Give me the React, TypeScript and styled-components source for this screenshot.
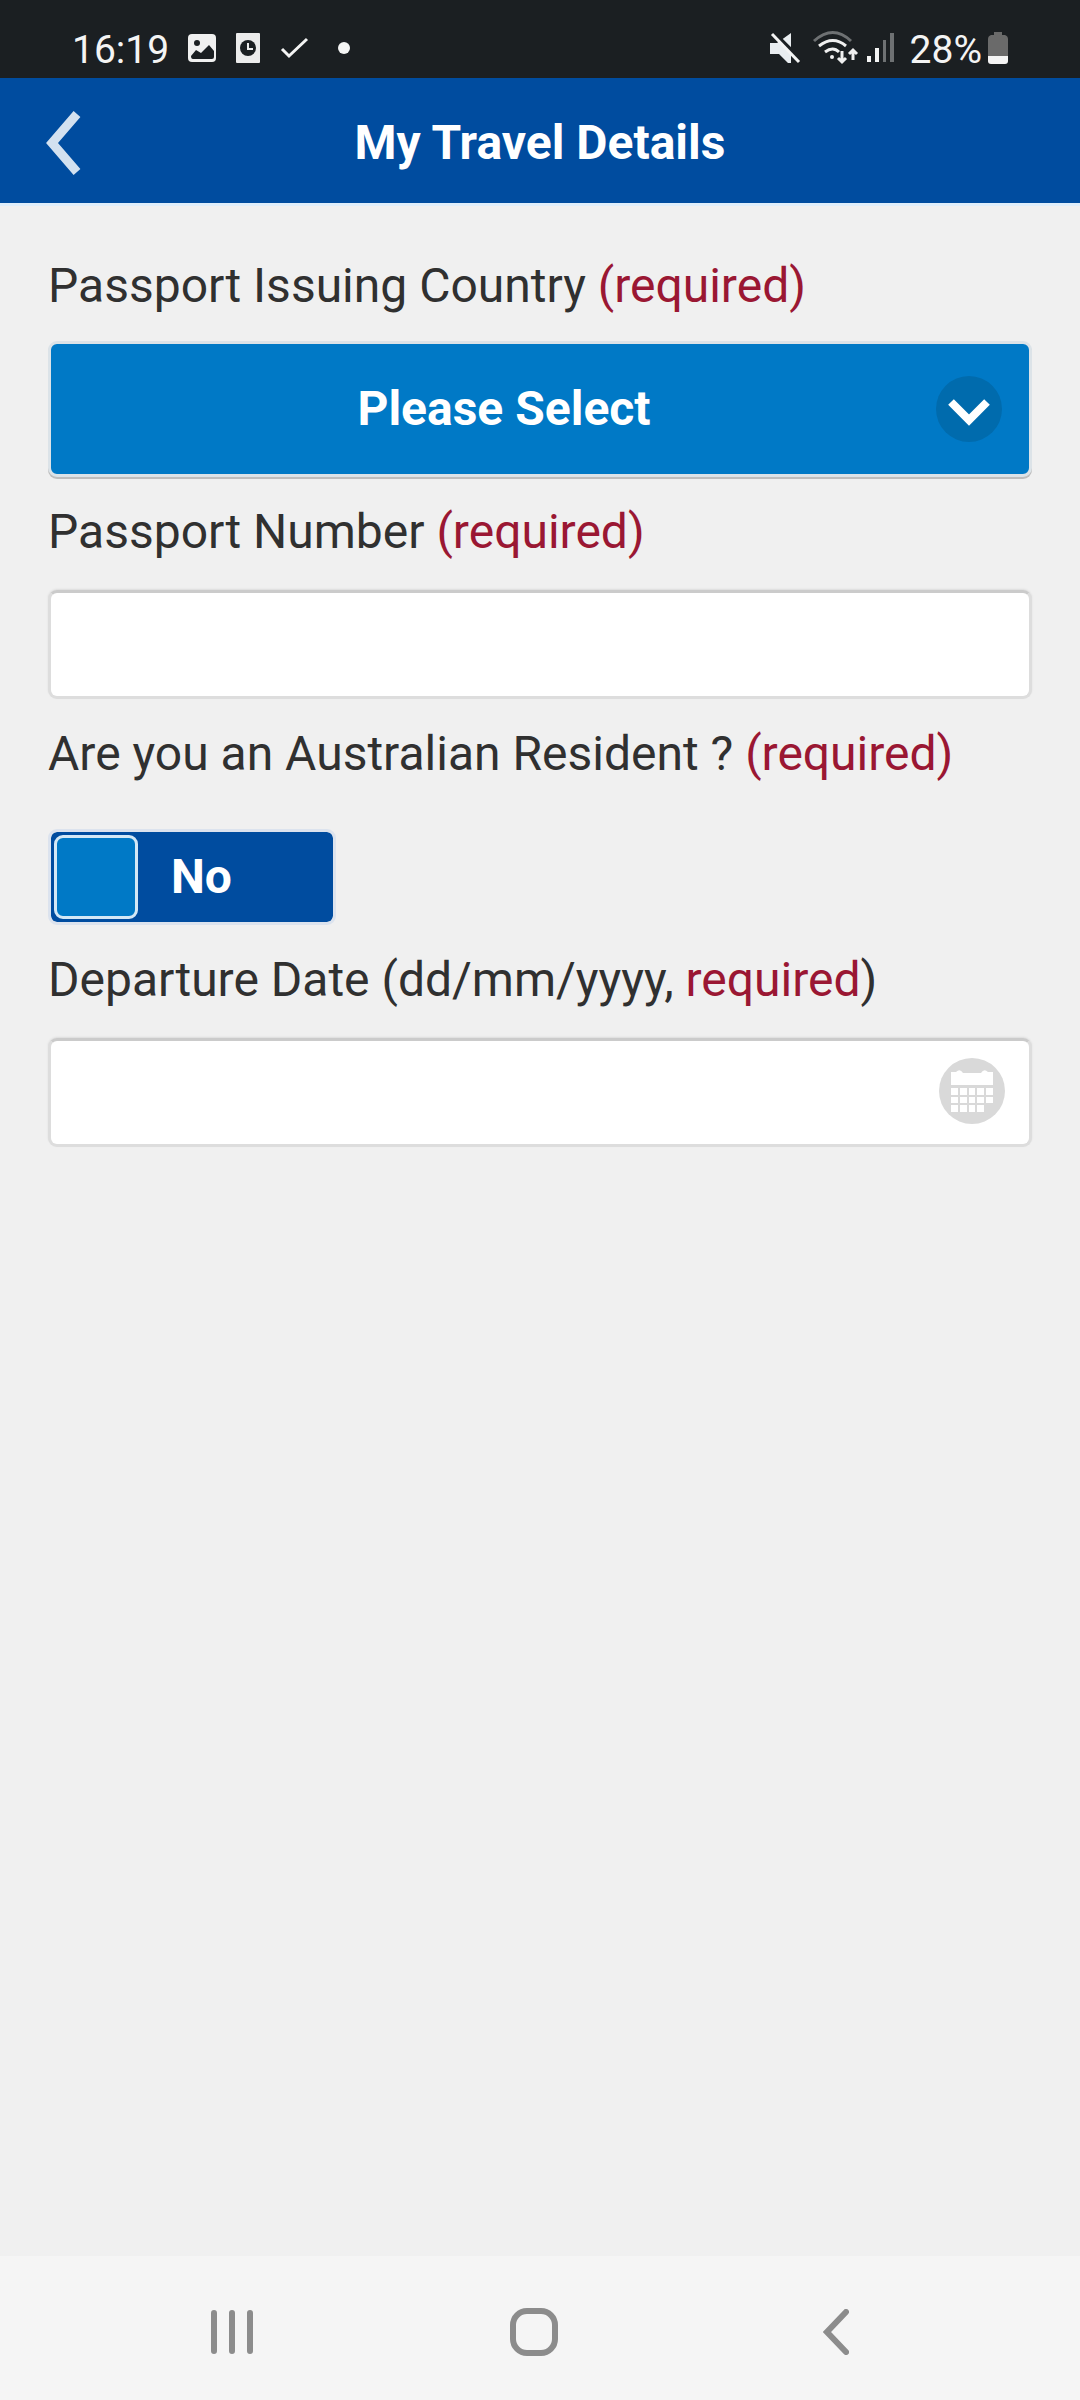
import React, { useState } from "react";
import styled, { createGlobalStyle } from "styled-components";

const color = {
  status: "#1b1f22",
  navy: "#004c9f",
  blue: "#0079c6",
  disc: "#006bad",
  page: "#f0f0f0",
  nav: "#f5f5f5",
  text: "#303030",
  required: "#9a1733",
  icon: "#8c8c8c",
};

const GlobalStyle = createGlobalStyle`
  * { box-sizing: border-box; }
  body {
    margin: 0;
    background: ${color.page};
    color: ${color.text};
    font-family: Roboto, "Noto Sans", sans-serif;
    font-size: 48px;
    line-height: 56px;
  }
  button, input, select { font: inherit; }
`;

const Screen = styled.div`
  min-height: 100vh;
  display: flex;
  flex-direction: column;
`;

const StatusBar = styled.div`
  display: flex;
  justify-content: space-between;
  padding: 26px 72px 4px 72px;
  background: ${color.status};
  color: #f4f4f4;
  font-size: 39px;
  line-height: 48px;
`;

const StatusGroup = styled.div<{ $gap: number }>`
  display: flex;
  align-items: center;
  gap: ${(p) => p.$gap}px;
`;

const Header = styled.header`
  display: grid;
  grid-template-columns: 120px 1fr 120px;
  align-items: center;
  height: 128px;
  padding-top: 4px;
  background: ${color.navy};
  border-bottom: 3px solid #dfeefb;
`;

const BackButton = styled.button`
  display: flex;
  align-items: center;
  padding: 0 0 0 44px;
  border: 0;
  background: none;
`;

const Title = styled.h1`
  margin: 0;
  color: #fff;
  font-size: 48px;
  font-weight: 700;
  text-align: center;
`;

const Form = styled.form`
  flex: 1;
  padding: 52px 48px;
`;

const Field = styled.div<{ $labelGap: number }>`
  display: flex;
  flex-direction: column;
  gap: ${(p) => p.$labelGap}px;
  margin-bottom: 27px;
`;

const Label = styled.label`
  display: block;
`;

const Required = styled.span`
  color: ${color.required};
`;

const ControlBox = styled.div`
  position: relative;
  display: flex;
`;

const Select = styled.select`
  appearance: none;
  width: 100%;
  height: 136px;
  padding: 0 72px 0 0;
  border: 3px solid #dce3e8;
  border-radius: 9px;
  box-shadow: 0 2px 0 #bdbdbd;
  background: ${color.blue};
  color: #fff;
  font-weight: 700;
  text-align: center;
  text-align-last: center;
`;

const Adornment = styled.span`
  position: absolute;
  top: 0;
  bottom: 0;
  right: 30px;
  display: flex;
  align-items: center;
  pointer-events: none;
`;

const TextInput = styled.input`
  width: 100%;
  height: 109px;
  padding: 0 24px;
  border: 3px solid #dddddd;
  border-top-color: #cbcbcb;
  border-radius: 9px;
  box-shadow: 0 -1px 2px #dcdcdc;
  background: #fff;
  color: ${color.text};
`;

const CalendarButton = styled.button`
  position: absolute;
  top: 0;
  bottom: 0;
  right: 27px;
  display: flex;
  align-items: center;
  padding: 0 0 3px;
  border: 0;
  background: none;
`;

const SwitchTrack = styled.label`
  display: flex;
  align-self: flex-start;
  align-items: center;
  gap: 33px;
  width: 288px;
  height: 96px;
  padding: 3px;
  border: 3px solid #dce3ee;
  border-radius: 9px;
  background: ${color.navy};
  background-clip: padding-box;
  color: #fff;
  font-weight: 700;

  &:has(input:checked) {
    flex-direction: row-reverse;
  }
`;

const SwitchKnob = styled.input`
  appearance: none;
  width: 84px;
  height: 84px;
  margin: 0;
  border: 3px solid #d3e8f6;
  border-radius: 9px;
  background: ${color.blue};
`;

const NavBar = styled.nav`
  display: grid;
  grid-template-columns: repeat(3, 1fr);
  height: 144px;
  padding: 8px 93px 0 81px;
  background: ${color.nav};
`;

const NavButton = styled.button`
  display: flex;
  align-items: center;
  justify-content: center;
  padding: 0;
  border: 0;
  background: none;
`;

function NotificationIcons() {
  return (
    <svg width="164" height="40" viewBox="188 30 164 40" aria-hidden="true">
      <rect x="188" y="34" width="28" height="28" rx="4" fill="#f0f0f0" />
      <circle cx="197" cy="43" r="3" fill={color.status} />
      <path d="M191 56l5-6 5 3 8-8 5 6v6q0 2-2 2h-19q-2 0-2-3z" fill={color.status} />
      <rect x="236" y="33" width="24" height="30" rx="1" fill="#ececec" />
      <circle cx="248" cy="48" r="8" fill={color.status} />
      <path d="M248 43v6h5" fill="none" stroke="#ececec" strokeWidth="2" />
      <path d="M282 49l7 7 18-17" fill="none" stroke="#f4f4f4" strokeWidth="3" />
      <circle cx="344" cy="48" r="6" fill="#f4f4f4" />
    </svg>
  );
}

function SignalIcons() {
  return (
    <svg width="126" height="40" viewBox="769 30 126 40" aria-hidden="true">
      <path d="M770 43h7l14-10v30h-3l-9-9h-9z" fill="#e9edf0" />
      <path d="M771 30l31 31" stroke={color.status} strokeWidth="4" />
      <path d="M772 34l27 28" stroke="#f4f4f4" strokeWidth="3" />
      <g fill="none" strokeWidth="3">
        <path d="M814 41q19-17 37 0" stroke="#6e7173" />
        <path d="M819 46q14-11 27 0" stroke="#f0f0f0" />
        <path d="M825 52q8-6 14 0" stroke="#f0f0f0" />
        <path d="M842 51v11M838 58l4 4 4-4" stroke="#f0f0f0" />
        <path d="M853 60v-10M849 54l4-4 4 4" stroke="#f0f0f0" />
      </g>
      <circle cx="832" cy="57" r="2" fill="#f0f0f0" />
      <rect x="867" y="56" width="4" height="6" fill="#f4f4f4" />
      <rect x="875" y="48" width="4" height="14" fill="#f4f4f4" />
      <rect x="883" y="40" width="3" height="22" fill="#6e7173" />
      <rect x="890" y="33" width="4" height="29" fill="#6e7173" />
    </svg>
  );
}

function BatteryIcon() {
  return (
    <svg width="20" height="40" viewBox="0 30 20 40" aria-hidden="true">
      <path d="M6 32h8v3h3q3 1 3 4v17H0V39q0-3 3-4h3z" fill="#6a6a6a" />
      <path d="M0 56h20v5q0 3-3 3H3q-3 0-3-3z" fill="#f4f4f4" />
    </svg>
  );
}

function BackChevron() {
  return (
    <svg width="40" height="68" viewBox="44 110 40 68" aria-hidden="true">
      <path d="M77 115L52 144l25 29" fill="none" stroke="#d3e1f0" strokeWidth="9" />
    </svg>
  );
}

function DropdownIcon() {
  return (
    <svg width="66" height="66" viewBox="0 0 66 66" aria-hidden="true">
      <circle cx="33" cy="33" r="33" fill={color.disc} />
      <path d="M15 26l18 18 18-18" fill="none" stroke="#fff" strokeWidth="8" />
    </svg>
  );
}

function CalendarIcon() {
  return (
    <svg width="66" height="66" viewBox="0 0 66 66" aria-hidden="true">
      <circle cx="33" cy="33" r="33" fill="#d9d9d9" />
      <path d="M12 14h5q4-4 7 1h18q3-5 7-1h5v13H12z" fill="#fff" />
      <path d="M12 30h42v16h-9v8H12z" fill="#fff" />
      <path
        d="M20 30v24M29 30v24M37 30v24M46 30v17M12 38h42M12 46h42"
        fill="none"
        stroke="#d9d9d9"
        strokeWidth="2"
      />
    </svg>
  );
}

export default function App() {
  const [resident, setResident] = useState(false);

  return (
    <Screen>
      <GlobalStyle />
      <StatusBar>
        <StatusGroup $gap={19}>
          <span>16:19</span>
          <NotificationIcons />
        </StatusGroup>
        <StatusGroup $gap={6}>
          <StatusGroup $gap={15}>
            <SignalIcons />
            <span>28%</span>
          </StatusGroup>
          <BatteryIcon />
        </StatusGroup>
      </StatusBar>

      <Header>
        <BackButton type="button" aria-label="Back">
          <BackChevron />
        </BackButton>
        <Title>My Travel Details</Title>
      </Header>

      <Form>
        <Field $labelGap={27}>
          <Label htmlFor="country">
            Passport Issuing Country <Required>(required)</Required>
          </Label>
          <ControlBox>
            <Select id="country" required>
              <option value="">Please Select</option>
            </Select>
            <Adornment>
              <DropdownIcon />
            </Adornment>
          </ControlBox>
        </Field>

        <Field $labelGap={30}>
          <Label htmlFor="passport">
            Passport Number <Required>(required)</Required>
          </Label>
          <TextInput id="passport" type="text" required />
        </Field>

        <Field $labelGap={47}>
          <Label htmlFor="resident">
            Are you an Australian Resident ? <Required>(required)</Required>
          </Label>
          <SwitchTrack>
            <SwitchKnob
              id="resident"
              type="checkbox"
              role="switch"
              checked={resident}
              onChange={(e) => setResident(e.target.checked)}
            />
            <span>{resident ? "Yes" : "No"}</span>
          </SwitchTrack>
        </Field>

        <Field $labelGap={30}>
          <Label htmlFor="departure">
            Departure Date (dd/mm/yyyy, <Required>required</Required>)
          </Label>
          <ControlBox>
            <TextInput id="departure" type="text" required />
            <CalendarButton type="button" aria-label="Choose date">
              <CalendarIcon />
            </CalendarButton>
          </ControlBox>
        </Field>
      </Form>

      <NavBar aria-label="System">
        <NavButton type="button" aria-label="Recent apps">
          <svg width="42" height="46" viewBox="0 0 42 46" fill="none" stroke={color.icon} strokeWidth="6" strokeLinecap="round">
            <path d="M3 4v38M21 4v38M39 4v38" />
          </svg>
        </NavButton>
        <NavButton type="button" aria-label="Home">
          <svg width="48" height="48" viewBox="0 0 48 48" fill="none" stroke={color.icon} strokeWidth="6">
            <rect x="3" y="3" width="42" height="42" rx="14" />
          </svg>
        </NavButton>
        <NavButton type="button" aria-label="Back">
          <svg width="26" height="46" viewBox="0 0 26 46" fill="none" stroke={color.icon} strokeWidth="6" strokeLinecap="round">
            <path d="M23 3L4 23l19 20" />
          </svg>
        </NavButton>
      </NavBar>
    </Screen>
  );
}
